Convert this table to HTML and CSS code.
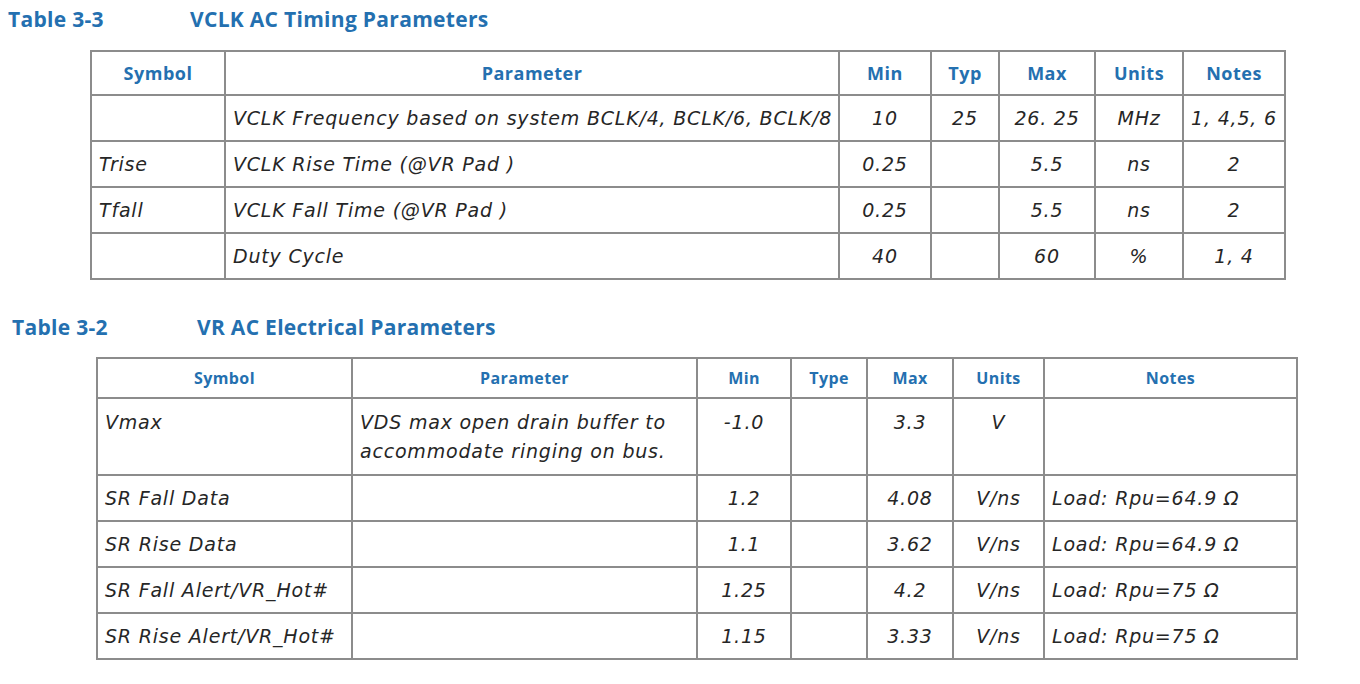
FILE: index.html
```html
<!DOCTYPE html>
<html>
<head>
<meta charset="utf-8">
<link rel="stylesheet" href="styles.css">
</head>
<body>
<div class="page">
  <h2 class="caption cap1"><span class="num">Table 3-3</span><span class="name">VCLK AC Timing Parameters</span></h2>
  <table class="spec t1">
    <colgroup>
      <col style="width:134px"><col style="width:614px"><col style="width:92px"><col style="width:68px"><col style="width:96px"><col style="width:88px"><col style="width:102px">
    </colgroup>
    <thead>
      <tr><th>Symbol</th><th>Parameter</th><th>Min</th><th>Typ</th><th>Max</th><th>Units</th><th>Notes</th></tr>
    </thead>
    <tbody>
      <tr><td class="l"></td><td class="l">VCLK Frequency based on system BCLK/4, BCLK/6, BCLK/8</td><td>10</td><td>25</td><td>26. 25</td><td>MHz</td><td>1, 4,5, 6</td></tr>
      <tr><td class="l">Trise</td><td class="l">VCLK Rise Time (@VR Pad )</td><td>0.25</td><td></td><td>5.5</td><td>ns</td><td>2</td></tr>
      <tr><td class="l">Tfall</td><td class="l">VCLK Fall Time (@VR Pad )</td><td>0.25</td><td></td><td>5.5</td><td>ns</td><td>2</td></tr>
      <tr><td class="l"></td><td class="l">Duty Cycle</td><td>40</td><td></td><td>60</td><td>%</td><td>1, 4</td></tr>
    </tbody>
  </table>

  <h2 class="caption cap2"><span class="num">Table 3-2</span><span class="name">VR AC Electrical Parameters</span></h2>
  <table class="spec t2">
    <colgroup>
      <col style="width:255px"><col style="width:345px"><col style="width:94px"><col style="width:76px"><col style="width:86px"><col style="width:91px"><col style="width:253px">
    </colgroup>
    <thead>
      <tr><th>Symbol</th><th>Parameter</th><th>Min</th><th>Type</th><th>Max</th><th>Units</th><th>Notes</th></tr>
    </thead>
    <tbody>
      <tr class="tall"><td class="l">Vmax</td><td class="l">VDS max open drain buffer to<br>accommodate ringing on bus.</td><td>-1.0</td><td></td><td>3.3</td><td>V</td><td class="l"></td></tr>
      <tr><td class="l">SR Fall Data</td><td class="l"></td><td>1.2</td><td></td><td>4.08</td><td>V/ns</td><td class="l">Load: Rpu=64.9 Ω</td></tr>
      <tr><td class="l">SR Rise Data</td><td class="l"></td><td>1.1</td><td></td><td>3.62</td><td>V/ns</td><td class="l">Load: Rpu=64.9 Ω</td></tr>
      <tr><td class="l">SR Fall Alert/VR_Hot#</td><td class="l"></td><td>1.25</td><td></td><td>4.2</td><td>V/ns</td><td class="l">Load: Rpu=75 Ω</td></tr>
      <tr><td class="l">SR Rise Alert/VR_Hot#</td><td class="l"></td><td>1.15</td><td></td><td>3.33</td><td>V/ns</td><td class="l">Load: Rpu=75 Ω</td></tr>
    </tbody>
  </table>
</div>
</body>
</html>
```

FILE: styles.css
```css
html, body {
  margin: 0;
  padding: 0;
  background: #ffffff;
}

.page {
  width: 1360px;
  height: 684px;
  overflow: hidden;
  font-family: "Open Sans", "Noto Sans", "Liberation Sans", sans-serif;
  color: #2a2a2a;
}

.caption {
  margin: 0;
  font-size: 21px;
  letter-spacing: 0.3px;
  font-weight: 700;
  color: #2470b0;
  line-height: 26px;
  display: flex;
}

.cap1 {
  padding: 6px 0 0 8px;
}

.cap1 .num {
  width: 182px;
}

.cap2 {
  padding: 0 0 0 12px;
  margin-top: 34px;
}

.cap2 .num {
  width: 185px;
}

.spec {
  border-collapse: collapse;
  table-layout: fixed;
}

.spec th,
.spec td {
  border: 2px solid #8c8c8c;
  padding: 0 7px;
  text-align: center;
  white-space: nowrap;
  overflow: hidden;
}

.spec th {
  color: #2470b0;
  font-weight: 700;
}

.spec td {
  font-family: "DejaVu Sans", "Open Sans", sans-serif;
  font-style: italic;
  font-size: 19px;
  letter-spacing: 0.8px;
  color: #262626;
}

.spec td.l {
  text-align: left;
}

.t1 {
  margin: 18px 0 0 90px;
  width: 1194px;
}

.t1 th {
  font-size: 18px;
  letter-spacing: 0.5px;
  height: 42px;
}

.t1 td {
  height: 44px;
}

.t2 {
  margin: 17px 0 0 96px;
  width: 1200px;
}

.t2 th {
  font-size: 16px;
  letter-spacing: 0.4px;
  height: 38px;
}

.t2 td {
  height: 44px;
}

.t2 .tall td {
  height: 66px;
  vertical-align: top;
  padding-top: 9px;
  line-height: 29px;
}
```
